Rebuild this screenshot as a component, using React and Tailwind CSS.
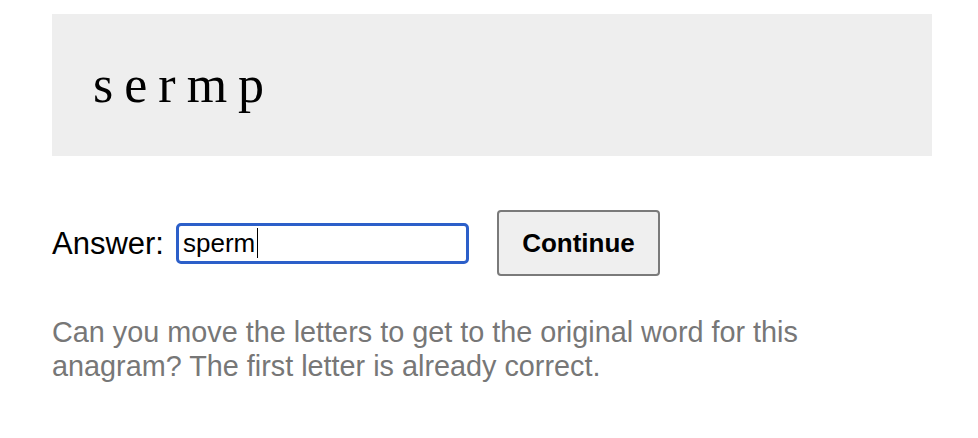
import { useState } from 'react'

export default function App() {
    const [answer, setAnswer] = useState('sperm')

    return (
        <div className="pt-[14px] pl-[52px] font-['Liberation_Sans',Arial,sans-serif] text-black">
            {/* Anagram */}
            <div className="w-[880px] bg-[#eeeeee] pl-[41px] py-[41px] font-['Liberation_Serif','Times_New_Roman',serif] text-[52px] leading-[60px] tracking-[11px]">
                sermp
            </div>

            {/* Answer row */}
            <div className="mt-[54px] flex items-center h-[66px]">
                <label htmlFor="answer" className="text-[31px] leading-none">Answer:</label>
                <div className="relative ml-[12px]">
                    <input
                        id="answer"
                        type="text"
                        value={answer}
                        onChange={(e) => setAnswer(e.target.value)}
                        className="block w-[293px] h-[41px] border-[3px] border-[#2c5fc9] rounded-[5px] pl-[4px] text-[26px] outline-none caret-black bg-white"
                    />
                    {/* caret as in the focused field */}
                    <span className="absolute left-[81px] top-[5px] w-px h-[30px] bg-black pointer-events-none" />
                </div>
                <button
                    type="button"
                    className="ml-[28px] w-[163px] h-[66px] border-2 border-[#7a7a7a] rounded-[4px] bg-[#efefef] text-[26px] font-bold"
                >
                    Continue
                </button>
            </div>

            <p className="mt-[39px] w-[880px] text-[28.8px] leading-[34px] text-[#777777]">
                Can you move the letters to get to the original word for this anagram? The first letter is already correct.
            </p>
        </div>
    )
}
